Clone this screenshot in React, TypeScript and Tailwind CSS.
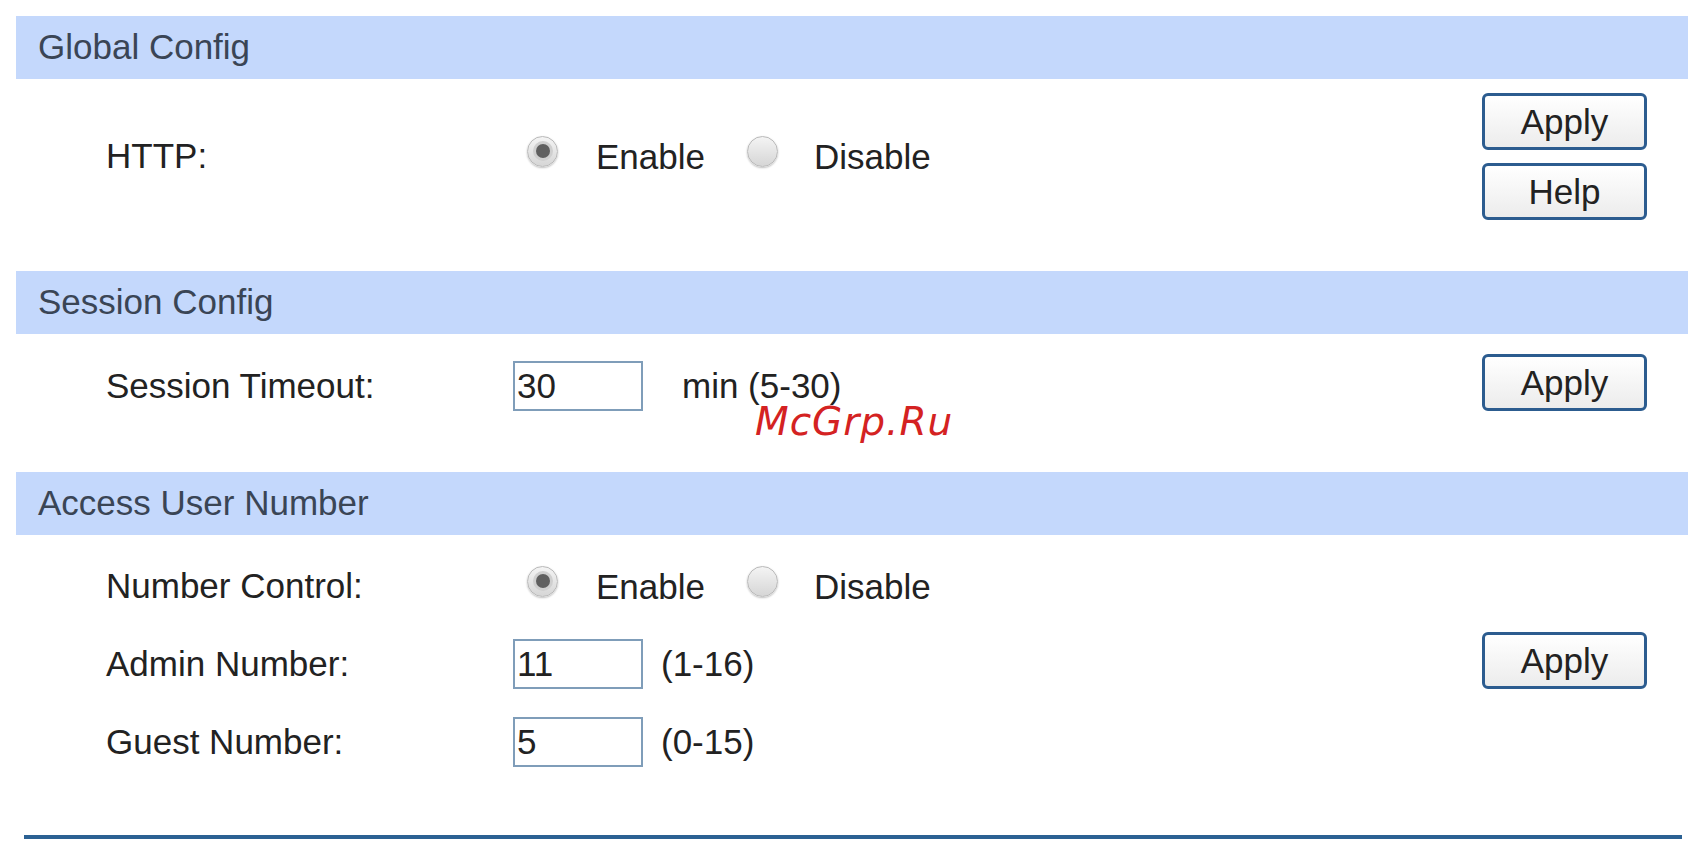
import React from "react";

const font = { fontFamily: '"Liberation Sans", Arial, sans-serif' };

function Header({ title }: { title: string }) {
    return (
        <div className="flex h-[63px] items-center bg-[#c4d8fc] pl-[22px] text-[35px] text-[#3a4555]">
            {title}
        </div>
    );
}

function Radio({ checked }: { checked?: boolean }) {
    return (
        <span className="flex size-[31px] items-center justify-center rounded-full border border-[#b9b9b9] bg-gradient-to-b from-[#f4f4f4] to-[#d6d6d6] shadow-[0_1px_2px_rgba(0,0,0,0.25)]">
            {checked && (
                <span className="size-[14px] rounded-full bg-[#5f5f5f] shadow-[0_0_0_3px_#cfcfcf]" />
            )}
        </span>
    );
}

function RadioPair() {
    return (
        <div className="flex items-center pl-[14px]">
            <span className="-mt-[10px]"><Radio checked /></span>
            <span className="ml-[38px] mt-[2px]">Enable</span>
            <span className="-mt-[10px] ml-[42px]"><Radio /></span>
            <span className="ml-[36px] mt-[2px]">Disable</span>
        </div>
    );
}

function TextBox({ value }: { value: string }) {
    return (
        <input
            readOnly
            value={value}
            className="h-[50px] w-[130px] border-2 border-[#7f9db9] bg-white pl-[2px] text-[35px] text-[#222] outline-none"
            style={font}
        />
    );
}

function Btn({ label }: { label: string }) {
    return (
        <button className="h-[57px] w-[165px] rounded-[6px] border-[3px] border-[#2c5c8f] bg-gradient-to-b from-white to-[#ececec] text-[35px] text-[#222]">
            {label}
        </button>
    );
}

function Row({ label, children }: { label: string; children: React.ReactNode }) {
    return (
        <div className="flex h-[50px] items-center">
            <div className="w-[497px] pl-[90px]">{label}</div>
            <div className="flex items-center">{children}</div>
        </div>
    );
}

export default function App() {
    return (
        <div className="relative min-h-[847px] w-[1701px] bg-white pt-[16px] text-[35px] text-[#222]" style={font}>
            <div className="ml-[16px] w-[1672px]">
                <Header title="Global Config" />
                <div className="flex h-[192px] justify-between pr-[41px]">
                    <div className="pt-[52px]">
                        <Row label="HTTP:">
                            <RadioPair />
                        </Row>
                    </div>
                    <div className="flex flex-col gap-[13px] pt-[14px]">
                        <Btn label="Apply" />
                        <Btn label="Help" />
                    </div>
                </div>

                <Header title="Session Config" />
                <div className="flex h-[138px] justify-between pr-[41px]">
                    <div className="pt-[27px]">
                        <Row label="Session Timeout:">
                            <TextBox value="30" />
                            <span className="ml-[39px]">min (5-30)</span>
                        </Row>
                    </div>
                    <div className="pt-[20px]">
                        <Btn label="Apply" />
                    </div>
                </div>

                <Header title="Access User Number" />
                <div className="flex h-[300px] justify-between pr-[41px]">
                    <div className="flex flex-col gap-[28px] pt-[26px]">
                        <Row label="Number Control:">
                            <RadioPair />
                        </Row>
                        <Row label="Admin Number:">
                            <TextBox value="11" />
                            <span className="ml-[18px]">(1-16)</span>
                        </Row>
                        <Row label="Guest Number:">
                            <TextBox value="5" />
                            <span className="ml-[18px]">(0-15)</span>
                        </Row>
                    </div>
                    <div className="pt-[97px]">
                        <Btn label="Apply" />
                    </div>
                </div>
            </div>
            <div className="ml-[24px] h-[4px] w-[1658px] bg-[#2b6193]" />

            {/* watermark over the page */}
            <div
                className="absolute left-[755px] top-[402px] text-[39px] leading-none italic tracking-[1px] text-[#d42222]"
                style={{ fontFamily: '"DejaVu Sans", sans-serif' }}
            >
                McGrp.Ru
            </div>
        </div>
    );
}
